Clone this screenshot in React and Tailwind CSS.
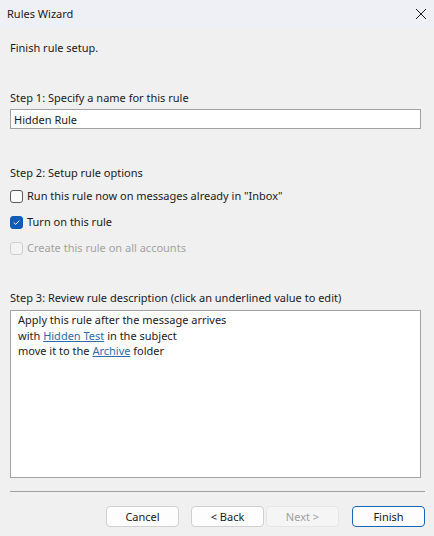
import React, { useState } from "react";

function Check({ checked, disabled, label, onChange }) {
  return (
    <label className={`flex items-center gap-[4px] h-[16px] ${disabled ? "text-[#a3a3a3]" : "text-[#1a1a1a]"}`}>
      <span
        onClick={disabled ? undefined : onChange}
        className={`flex items-center justify-center w-[13px] h-[13px] rounded-[3px] border ${
          checked
            ? "bg-[#0f5cb8] border-[#0f5cb8]"
            : disabled
            ? "bg-[#f3f3f3] border-[#cfcfcf]"
            : "bg-[#fbfbfb] border-[#5a5a5a]"
        }`}
      >
        {checked && (
          <svg width="9" height="9" viewBox="0 0 9 9" fill="none">
            <path d="M1.8 4.6 L3.7 6.4 L7.3 2.6" stroke="white" strokeWidth="1" />
          </svg>
        )}
      </span>
      <span>{label}</span>
    </label>
  );
}

function Btn({ children, primary, disabled }) {
  return (
    <button
      className={`w-[73px] h-[21px] rounded-[4px] text-[11px] leading-none border ${
        disabled
          ? "bg-[#f5f5f5] border-[#e6e6e6] text-[#a0a0a0]"
          : primary
          ? "bg-[#fdfdfd] border-[#1866b8] text-[#1a1a1a]"
          : "bg-[#fdfdfd] border-[#d0d0d0] text-[#1a1a1a]"
      }`}
    >
      {children}
    </button>
  );
}

export default function App() {
  const [name, setName] = useState("Hidden Rule");
  const [runNow, setRunNow] = useState(false);
  const [turnOn, setTurnOn] = useState(true);

  return (
    <div className="w-[434px] h-[536px] flex flex-col bg-[#f0f0f0] text-[11px] text-[#1a1a1a] font-['Noto_Sans',sans-serif] overflow-hidden">
      <div className="h-[28px] flex items-center justify-between pl-[7px] pr-[7px] bg-[#eff0f5]">
        <span className="text-[11px]">Rules Wizard</span>
        <svg width="12" height="12" viewBox="0 0 12 12" fill="none">
          <path d="M1 1 L11 11 M11 1 L1 11" stroke="#1a1a1a" strokeWidth="1" />
        </svg>
      </div>

      <div className="flex-1 flex flex-col px-[10px]">
        <div className="mt-[11px] h-[18px] flex items-center">Finish rule setup.</div>

        <div className="mt-[33px] h-[16px] flex items-center">Step 1: Specify a name for this rule</div>
        <input
          value={name}
          onChange={(e) => setName(e.target.value)}
          className="mt-[3px] w-[411px] h-[20px] px-[3px] bg-white border border-[#a2a2a2] outline-none text-[11px]"
        />

        <div className="mt-[36px] h-[16px] flex items-center">Step 2: Setup rule options</div>
        <div className="mt-[7px] flex flex-col gap-[10px]">
          <Check
            checked={runNow}
            onChange={() => setRunNow(!runNow)}
            label={'Run this rule now on messages already in "Inbox"'}
          />
          <Check checked={turnOn} onChange={() => setTurnOn(!turnOn)} label="Turn on this rule" />
          <Check disabled label="Create this rule on all accounts" />
        </div>

        <div className="mt-[34px] h-[16px] flex items-center">
          Step 3: Review rule description (click an underlined value to edit)
        </div>
        <div className="mt-[4px] w-[411px] h-[168px] bg-white border border-[#a2a2a2] px-[7px] pt-[1px] leading-[15.5px]">
          <div>Apply this rule after the message arrives</div>
          <div>
            with <a className="text-[#2e6cad] underline">Hidden Test</a> in the subject
          </div>
          <div>
            move it to the <a className="text-[#2e6cad] underline">Archive</a> folder
          </div>
        </div>

        <div className="mt-[13px] w-[415px] h-px bg-[#a0a0a0]" />

        <div className="mt-[14px] flex justify-end mr-[-1px]">
          <Btn>Cancel</Btn>
          <div className="ml-[12px] flex gap-[2px]">
            <Btn>&lt; Back</Btn>
            <Btn disabled>Next &gt;</Btn>
          </div>
          <div className="ml-[13px]">
            <Btn primary>Finish</Btn>
          </div>
        </div>
      </div>
    </div>
  );
}
